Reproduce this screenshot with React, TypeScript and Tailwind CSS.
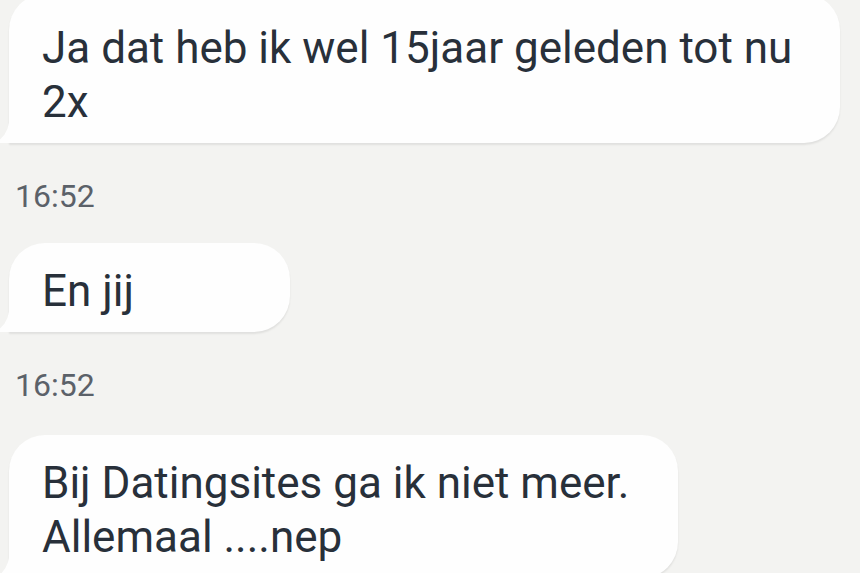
import React from "react";

type BubbleProps = {
  width: string;
  className?: string;
  children: React.ReactNode;
};

// incoming message bubble with the little tail at the bottom-left
const Bubble = ({ width, className = "", children }: BubbleProps) => {
  return (
    <div
      className={`relative ml-[9px] bg-[#fefefe] rounded-[36px] rounded-bl-none shadow-[0_2px_2px_rgba(0,0,0,0.08)] pl-[33px] pr-[40px] pb-[14px] text-[44px] leading-[54px] text-[#28303a] ${width} ${className}`}
    >
      <svg
        className="absolute left-[-14px] bottom-0"
        width="15"
        height="30"
        viewBox="0 0 15 30"
      >
        <path d="M15 0 Q15 22 0 30 L15 30 Z" fill="#fefefe" />
      </svg>
      {children}
    </div>
  );
};

const Time = ({ children }: { children: React.ReactNode }) => (
  <div className="pl-[15px] text-[32px] leading-[36px] text-[#5b6169]">
    {children}
  </div>
);

export default function App() {
  return (
    <div
      className="h-[573px] w-[860px] overflow-hidden bg-[#f3f3f1]"
      style={{ fontFamily: "Roboto, 'Noto Sans', sans-serif" }}
    >
      <div className="flex flex-col">
        <Bubble width="w-[831px]" className="mt-[-6px] pt-[27px]">
          Ja dat heb ik wel 15jaar geleden tot nu
          <br />
          2x
        </Bubble>
        <div className="mt-[35px]">
          <Time>16:52</Time>
        </div>
        <Bubble width="w-[281px]" className="mt-[29px] pt-[21px]">
          En jij
        </Bubble>
        <div className="mt-[35px]">
          <Time>16:52</Time>
        </div>
        <Bubble width="w-[669px]" className="mt-[32px] pt-[21px]">
          Bij Datingsites ga ik niet meer.
          <br />
          Allemaal ....nep
        </Bubble>
      </div>
    </div>
  );
}
